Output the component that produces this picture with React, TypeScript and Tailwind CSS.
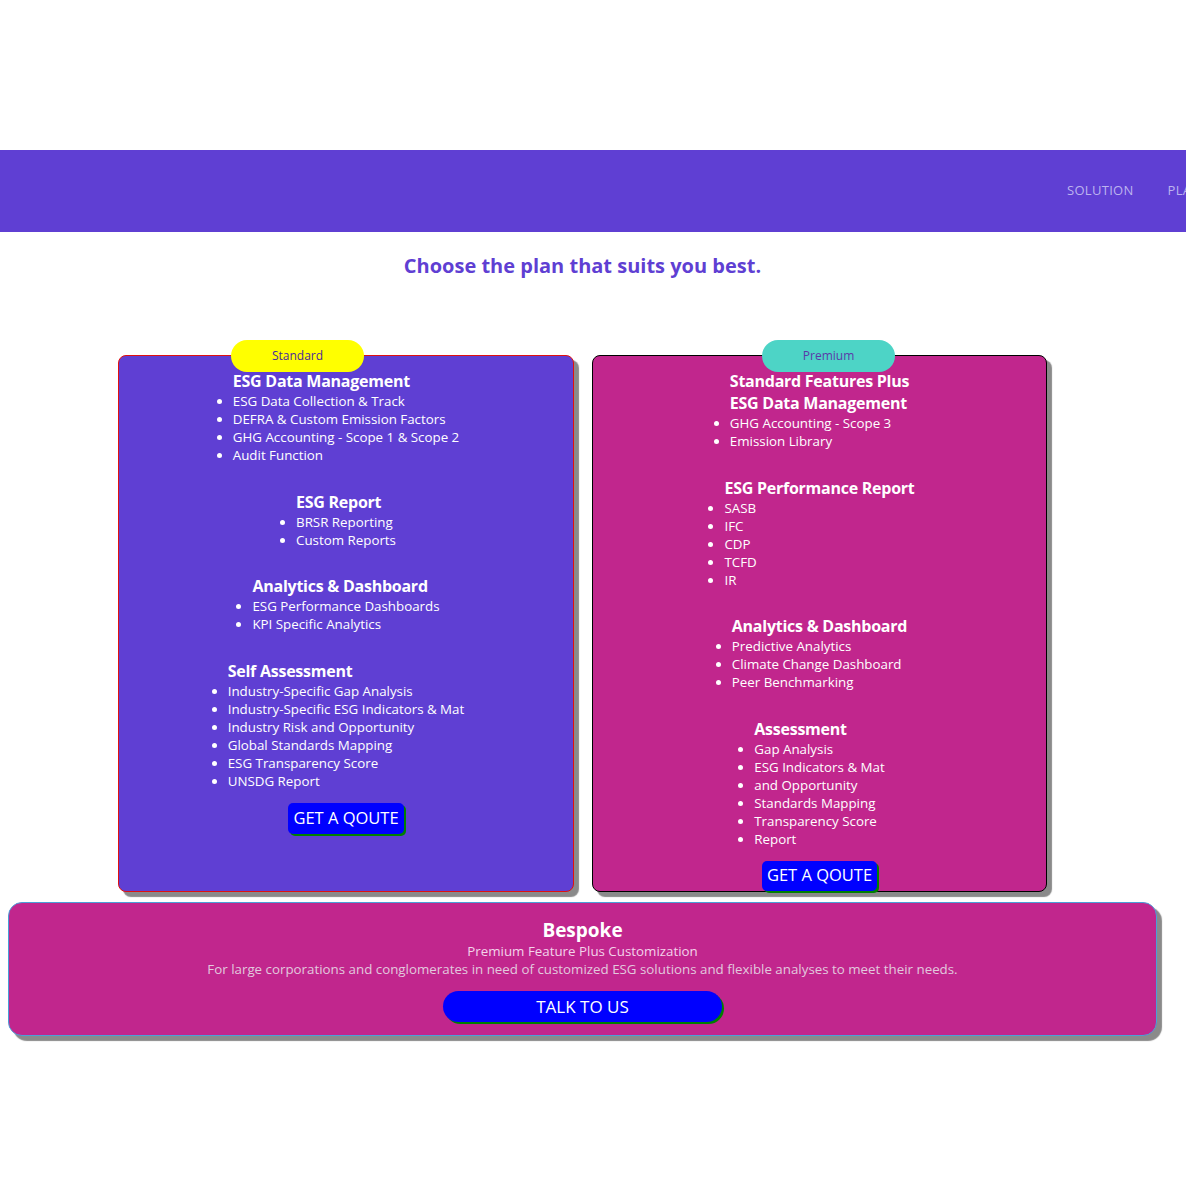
type Section = {
  title: string[];
  items: string[];
};

type Plan = {
  name: string;
  badgeClass: string;
  cardClass: string;
  sections: Section[];
};

const plans: Plan[] = [
  {
    name: 'Standard',
    badgeClass: 'left-[112px] bg-[#ffff00] text-[#4b2a9c]',
    cardClass: 'w-[456px] border-[#e01010] bg-[#5f3fd3]',
    sections: [
      {
        title: ['ESG Data Management'],
        items: [
          'ESG Data Collection & Track',
          'DEFRA & Custom Emission Factors',
          'GHG Accounting - Scope 1 & Scope 2',
          'Audit Function',
        ],
      },
      {
        title: ['ESG Report'],
        items: ['BRSR Reporting', 'Custom Reports'],
      },
      {
        title: ['Analytics & Dashboard'],
        items: ['ESG Performance Dashboards', 'KPI Specific Analytics'],
      },
      {
        title: ['Self Assessment'],
        items: [
          'Industry-Specific Gap Analysis',
          'Industry-Specific ESG Indicators & Mat',
          'Industry Risk and Opportunity',
          'Global Standards Mapping',
          'ESG Transparency Score',
          'UNSDG Report',
        ],
      },
    ],
  },
  {
    name: 'Premium',
    badgeClass: 'left-[169px] bg-[#4dd4c6] text-[#5b3aa8]',
    cardClass: 'w-[455px] border-black bg-[#c1268d]',
    sections: [
      {
        title: ['Standard Features Plus', 'ESG Data Management'],
        items: ['GHG Accounting - Scope 3', 'Emission Library'],
      },
      {
        title: ['ESG Performance Report'],
        items: ['SASB', 'IFC', 'CDP', 'TCFD', 'IR'],
      },
      {
        title: ['Analytics & Dashboard'],
        items: [
          'Predictive Analytics',
          'Climate Change Dashboard',
          'Peer Benchmarking',
        ],
      },
      {
        title: ['Assessment'],
        items: [
          'Gap Analysis',
          'ESG Indicators & Mat',
          'and Opportunity',
          'Standards Mapping',
          'Transparency Score',
          'Report',
        ],
      },
    ],
  },
];

function PlanCard({ plan }: { plan: Plan }) {
  return (
    <div
      className={`relative flex h-[537px] flex-col items-center rounded-[8px] border pt-[14px] text-white shadow-[5px_5px_1px_#8a8a8a] ${plan.cardClass}`}
    >
      <span
        className={`absolute top-[-16px] flex h-[32px] w-[133px] items-center justify-center rounded-full text-[12px] ${plan.badgeClass}`}
      >
        {plan.name}
      </span>

      <div className="flex flex-col items-center gap-[26.5px]">
        {plan.sections.map((section) => (
          <div key={section.title.join()} className="w-fit">
            {section.title.map((t) => (
              <h3
                key={t}
                className="text-[16px] font-bold leading-[22px] tracking-[-0.25px]"
              >
                {t}
              </h3>
            ))}
            <ul className="list-disc pl-0 text-[13.33px] leading-[18px]">
              {section.items.map((item) => (
                <li key={item} className="whitespace-nowrap">
                  {item}
                </li>
              ))}
            </ul>
          </div>
        ))}
      </div>

      <button className="mt-[13px] h-[31px] rounded-[5px] bg-[#0000ff] px-[5px] text-[16.5px] text-white shadow-[2px_2px_0_#008000]">
        GET A QOUTE
      </button>
    </div>
  );
}

export default function App() {
  return (
    <div
      className="min-h-[1186px] overflow-hidden bg-white"
      style={{ fontFamily: '"Open Sans", "Noto Sans", sans-serif' }}
    >
      <div className="h-[150px]" />

      {/* Nav */}
      <nav className="flex h-[82px] items-center gap-[34px] overflow-hidden whitespace-nowrap bg-[#5f3fd3] pl-[1067px] text-[13px] tracking-[0.3px] text-[#bcb3ef]">
        <span>SOLUTION</span>
        <span>PLANS</span>
      </nav>

      <div className="w-[1165px]">
        <h2 className="mt-[20px] text-center text-[20px] font-bold leading-[28px] text-[#5f3fd3]">
          Choose the plan that suits you best.
        </h2>

        {/* Plans */}
        <div className="mt-[75px] flex justify-center gap-[18px]">
          {plans.map((plan) => (
            <PlanCard key={plan.name} plan={plan} />
          ))}
        </div>

        {/* Bespoke */}
        <div className="ml-[8px] mt-[10px] flex w-[1149px] flex-col items-center rounded-[14px] border border-[#4a9fd8] bg-[#c1268d] pb-[13px] pt-[15px] shadow-[5px_5px_1px_#8a8a8a]">
          <h3 className="text-[19px] font-bold leading-[24px] text-white">
            Bespoke
          </h3>
          <p className="text-[13.33px] leading-[18px] text-[#f3d3ea]">
            Premium Feature Plus Customization
          </p>
          <p className="text-[13.33px] leading-[18px] text-[#e2c9dd]">
            For large corporations and conglomerates in need of customized ESG
            solutions and flexible analyses to meet their needs.
          </p>
          <button className="mt-[13px] h-[31px] w-[279px] rounded-full bg-[#0000ff] text-[17px] text-white shadow-[2px_2px_0_#008000]">
            TALK TO US
          </button>
        </div>
      </div>
    </div>
  );
}
